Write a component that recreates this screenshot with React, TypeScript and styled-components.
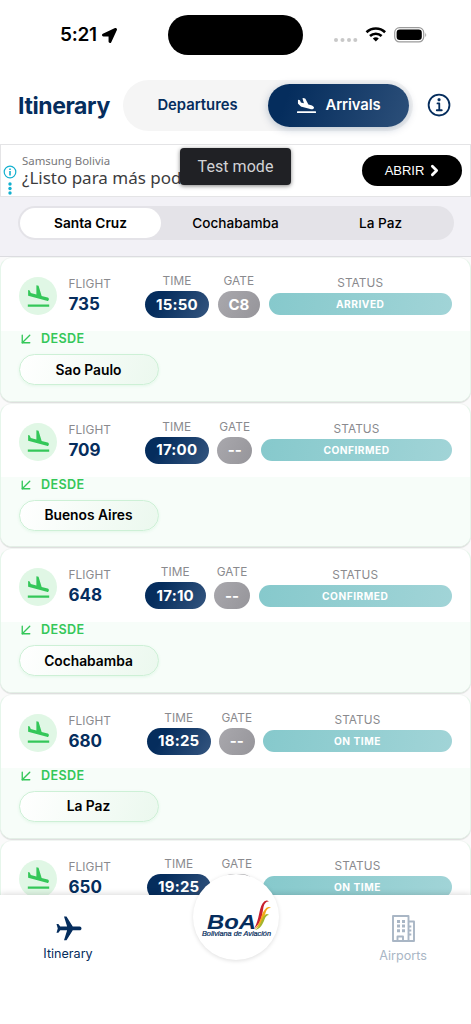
import React from "react";
import styled, { createGlobalStyle } from "styled-components";
import { MdFlight, MdFlightLand } from "react-icons/md";
import { FaPlaneArrival, FaLocationArrow } from "react-icons/fa";
import { IoInformationCircleOutline } from "react-icons/io5";
import { FiArrowDownLeft, FiChevronRight } from "react-icons/fi";

const NAVY = "#052d5d";
const GREEN = "#34c759";

const Global = createGlobalStyle`
  * { box-sizing: border-box; }
  body { margin: 0; background: #fff; font-family: Inter, "Liberation Sans", sans-serif; }
`;

const Screen = styled.div`
  position: relative;
  width: 471px;
  height: 1024px;
  overflow: hidden;
  display: flex;
  flex-direction: column;
  background: #fff;
`;

const Text = styled.span<{ $size: number; $weight?: number; $ls?: number; $color?: string; $lh?: number }>`
  display: block;
  white-space: nowrap;
  font-size: ${(p) => p.$size}px;
  font-weight: ${(p) => p.$weight ?? 400};
  letter-spacing: ${(p) => p.$ls ?? 0}px;
  color: ${(p) => p.$color ?? "#000"};
  line-height: ${(p) => p.$lh ?? 20}px;
`;

const StatusBar = styled.div`
  height: 70px;
  flex: none;
  display: flex;
  align-items: center;
  padding-left: 60px;
`;
const Clock = styled.div`
  width: 108px;
  display: flex;
  align-items: center;
  gap: 5px;
`;
const Island = styled.div`
  width: 135px;
  height: 40px;
  border-radius: 20px;
  background: #000;
`;
const Signals = styled.svg`
  margin-left: 30px;
`;

const Header = styled.header`
  height: 74px;
  flex: none;
  display: flex;
  align-items: center;
  padding: 0 15px 4px 18px;
`;
const Title = styled.h1`
  margin: 0;
  width: 105px;
  flex: none;
  padding-top: 1px;
  font-size: 23px;
  line-height: 28px;
  font-weight: 700;
  letter-spacing: -0.4px;
  color: ${NAVY};
`;
const Switcher = styled.div`
  width: 290px;
  flex: none;
  height: 51px;
  border-radius: 26px;
  background: #f5f5f5;
  display: flex;
  align-items: center;
  padding: 4px;
`;
const Mode = styled.div<{ $active?: boolean }>`
  width: 141px;
  height: 43px;
  border-radius: 22px;
  display: flex;
  align-items: center;
  justify-content: center;
  gap: 10px;
  color: #fff;
  flex: ${(p) => (p.$active ? "none" : 1)};
  ${(p) =>
    p.$active &&
    `background: linear-gradient(110deg, #052d5d 15%, #2c4f79); box-shadow: 0 2px 8px rgba(5,45,93,.25);`}
`;
const Info = styled.div`
  flex: none;
  margin-left: 12px;
  display: flex;
  color: ${NAVY};

  svg {
    stroke-width: 4;
  }
`;

const Ad = styled.div`
  height: 53px;
  flex: none;
  border: 1px solid #e4e4e6;
  background: #fff;
  display: flex;
  align-items: center;
  padding: 0 8px 0 2px;
`;
const AdChoices = styled.svg`
  width: 14px;
  height: 32px;
  margin: 20px 4px 0 0;
`;
const AdCopy = styled.div`
  flex: 1;
  padding-left: 1px;
  font-family: "Noto Sans", "Open Sans", sans-serif;
`;
const OpenButton = styled.div`
  width: 100px;
  height: 31px;
  border-radius: 16px;
  background: #000;
  color: #fff;
  display: flex;
  align-items: center;
  justify-content: center;
  gap: 2px;
  padding-left: 4px;
  font-family: "Liberation Sans", sans-serif;
`;
const Toast = styled.div`
  position: absolute;
  left: 180px;
  top: 148px;
  width: 111px;
  height: 37px;
  border-radius: 4px;
  background: #202125;
  box-shadow: 0 1px 4px rgba(0, 0, 0, 0.5);
  display: flex;
  align-items: center;
  justify-content: center;
  font-family: Roboto, sans-serif;
`;

const Cities = styled.div`
  height: 60px;
  flex: none;
  background: #f2f1f6;
  border-bottom: 1px solid #dcdce0;
  padding: 9px 17px 0 18px;
`;
const Segments = styled.div`
  height: 34px;
  border-radius: 17px;
  background: #e4e3e8;
  display: grid;
  grid-template-columns: 145px 145px 1fr;
  padding: 2px;
`;
const Segment = styled.div<{ $active?: boolean }>`
  width: 141px;
  height: 30px;
  border-radius: 15px;
  display: flex;
  align-items: center;
  justify-content: center;
  background: ${(p) => (p.$active ? "#fff" : "transparent")};
`;

const List = styled.main`
  height: 638px;
  flex: none;
  overflow: hidden;
  background: #fafafa;
`;
const Card = styled.article`
  margin-bottom: 1px;
  border: 1px solid #e6f6eb;
  border-top-color: #f1f5f2;
  border-bottom-color: #e3efe6;
  border-radius: 12px;
  background: #fff;
  box-shadow: 0 1px 1px rgba(0, 0, 0, 0.12);
  overflow: hidden;
`;
const Summary = styled.div`
  height: 73px;
  display: flex;
  padding-left: 18px;
`;
const Badge = styled.div`
  width: 38px;
  height: 38px;
  flex: none;
  margin-top: 19px;
  border-radius: 50%;
  background: #e0f7e5;
  color: ${GREEN};
  display: flex;
  align-items: center;
  justify-content: center;
`;
const FlightCol = styled.div<{ $w: number }>`
  width: ${(p) => p.$w}px;
  flex: none;
  padding: 18px 0 0 11.5px;
`;
const Col = styled.div<{ $w: number; $top: number }>`
  width: ${(p) => p.$w}px;
  flex: none;
  margin-right: 8.6px;
  padding-top: ${(p) => p.$top}px;
  display: flex;
  flex-direction: column;
  align-items: center;
  gap: 2px;
`;
const Pill = styled.div<{ $kind: "time" | "gate" | "status" }>`
  width: 100%;
  height: ${(p) => (p.$kind === "status" ? 22 : 27)}px;
  border-radius: 14px;
  display: flex;
  align-items: center;
  justify-content: center;
  background: ${(p) =>
    ({
      time: "linear-gradient(120deg, #052d5d 25%, #34557f)",
      gate: "linear-gradient(120deg, #a9a8ad, #96959a)",
      status: "linear-gradient(100deg, #86c9cc, #a1d4d7)",
    })[p.$kind]};
`;
const Origin = styled.div`
  height: 69.65px;
  background: #f7fdf9;
  padding: 0 18px;
`;
const From = styled.div`
  height: 16px;
  display: flex;
  align-items: center;
  gap: 6px;
  margin-left: -2px;
  color: ${GREEN};
`;
const Place = styled.div`
  width: 140px;
  height: 31px;
  margin-top: 7px;
  padding-right: 1px;
  border: 1px solid #cdf0d6;
  border-radius: 16px;
  background: linear-gradient(110deg, #fff, #ebf8ee);
  box-shadow: 0 1px 3px rgba(52, 199, 89, 0.1);
  display: flex;
  align-items: center;
  justify-content: center;
`;

const TabBar = styled.nav`
  position: relative;
  height: 129px;
  flex: none;
  background: #fff;
  box-shadow: 0 -1px 6px rgba(0, 0, 0, 0.15);
  display: flex;
  justify-content: space-between;
  padding: 18px 33px 0 33px;
`;
const Tab = styled.div<{ $gap: number }>`
  width: 70px;
  display: flex;
  flex-direction: column;
  align-items: center;
  gap: ${(p) => p.$gap}px;
  color: ${NAVY};
`;
const Plane = styled(MdFlight)`
  transform: rotate(90deg);
  margin: 1px 0 0 2px;
`;
const Logo = styled.div`
  position: absolute;
  left: 193px;
  top: -21px;
  width: 86px;
  height: 86px;
  border-radius: 50%;
  background: #fff;
  box-shadow: 0 1px 4px rgba(0, 0, 0, 0.13);
`;

type Flight = {
  no: string; time: string; gate: string; status: string; from?: string;
  lead: number; timeW: number; gateW: number; statusW: number;
};

const flights: Flight[] = [
  { no: "735", time: "15:50", gate: "C8", status: "ARRIVED", from: "Sao Paulo", lead: 88, timeW: 64, gateW: 42.5, statusW: 183 },
  { no: "709", time: "17:00", gate: "--", status: "CONFIRMED", from: "Buenos Aires", lead: 88, timeW: 63.5, gateW: 35.3, statusW: 191 },
  { no: "648", time: "17:10", gate: "--", status: "CONFIRMED", from: "Cochabamba", lead: 88, timeW: 60.5, gateW: 36, statusW: 193 },
  { no: "680", time: "18:25", gate: "--", status: "ON TIME", from: "La Paz", lead: 90, timeW: 63.5, gateW: 35.5, statusW: 188.5 },
  { no: "650", time: "19:25", gate: "--", status: "ON TIME", lead: 90, timeW: 63.5, gateW: 35.5, statusW: 188.5 },
];

const Label = ({ children }: { children: React.ReactNode }) => (
  <Text $size={11.8} $color="#8a8a8e" $lh={16} $ls={0.1}>{children}</Text>
);

const FlightCard = ({ f }: { f: Flight }) => (
  <Card>
    <Summary>
      <Badge><MdFlightLand size={27} /></Badge>
      <FlightCol $w={f.lead}>
        <Label>FLIGHT</Label>
        <Text $size={17} $weight={700} $color={NAVY} $lh={24}>{f.no}</Text>
      </FlightCol>
      <Col $w={f.timeW} $top={15}>
        <Label>TIME</Label>
        <Pill $kind="time"><Text $size={15} $weight={700} $color="#fff" $ls={0.2}>{f.time}</Text></Pill>
      </Col>
      <Col $w={f.gateW} $top={15}>
        <Label>GATE</Label>
        <Pill $kind="gate"><Text $size={15} $weight={700} $color="#fff">{f.gate}</Text></Pill>
      </Col>
      <Col $w={f.statusW} $top={17.3}>
        <Label>STATUS</Label>
        <Pill $kind="status"><Text $size={10.2} $weight={700} $color="#fff" $ls={0.5}>{f.status}</Text></Pill>
      </Col>
    </Summary>
    {f.from && (
      <Origin>
        <From>
          <FiArrowDownLeft size={18} strokeWidth={1.8} />
          <Text $size={12.6} $weight={600} $color={GREEN} $lh={16} $ls={0.35}>DESDE</Text>
        </From>
        <Place><Text $size={13.8} $weight={600}>{f.from}</Text></Place>
      </Origin>
    )}
  </Card>
);

const App = () => (
  <Screen>
    <Global />
    <StatusBar>
      <Clock>
        <Text $size={19} $weight={600} $ls={-0.3} $lh={24}>5:21</Text>
        <FaLocationArrow size={15} />
      </Clock>
      <Island />
      <Signals width="96" height="20" viewBox="0 0 96 20">
        <g fill="#c8c8c8">
          <circle cx="3" cy="15" r="2" /><circle cx="9.5" cy="15" r="2" /><circle cx="16" cy="15" r="2" /><circle cx="22.3" cy="15" r="2" />
        </g>
        <g fill="none" stroke="#000" strokeWidth="2.6">
          <path d="M33.5 7.2a13.5 13.5 0 0 1 18.6 0" />
          <path d="M37 11a8.5 8.5 0 0 1 11.6 0" />
        </g>
        <path d="M39.8 13.5a4.5 4.5 0 0 1 6 0L42.8 16.6z" />
        <rect x="61.7" y="2.7" width="29" height="14.2" rx="4.8" fill="none" stroke="#9b9b9b" strokeWidth="1.2" />
        <rect x="63.6" y="4.6" width="25.2" height="10.4" rx="3.2" />
        <path d="M92.3 7.6q1.8 2.2 0 4.6z" fill="#9b9b9b" />
      </Signals>
    </StatusBar>

    <Header>
      <Title>Itinerary</Title>
      <Switcher>
        <Mode><Text $size={14.8} $weight={600} $color={NAVY}>Departures</Text></Mode>
        <Mode $active>
          <FaPlaneArrival size={19} />
          <Text $size={14.8} $weight={600} $color="#fff" $ls={-0.1}>Arrivals</Text>
        </Mode>
      </Switcher>
      <Info><IoInformationCircleOutline size={29} /></Info>
    </Header>

    <Ad>
      <AdChoices viewBox="0 0 14 32">
        <circle cx="7" cy="7" r="5.8" fill="none" stroke="#12b0cf" strokeWidth="1.2" />
        <path d="M6.2 3.4h1.6v1.5H6.2zM6.2 6h1.6v4.6H6.2z" fill="#12b0cf" />
        <g fill="#12b0cf"><circle cx="7" cy="19" r="1.7" /><circle cx="7" cy="23.5" r="1.7" /><circle cx="7" cy="28" r="1.7" /></g>
      </AdChoices>
      <AdCopy>
        <Text $size={11.4} $color="#77777a" $lh={15}>Samsung Bolivia</Text>
        <Text $size={17} $color="#3c3c3e" $lh={20}>¿Listo para más pod</Text>
      </AdCopy>
      <OpenButton>
        <Text $size={13} $color="#fff">ABRIR</Text>
        <FiChevronRight size={17} strokeWidth={4} />
      </OpenButton>
    </Ad>

    <Cities>
      <Segments>
        <Segment $active><Text $size={13.7} $weight={600}>Santa Cruz</Text></Segment>
        <Segment><Text $size={13.6} $weight={500}>Cochabamba</Text></Segment>
        <Segment><Text $size={13.6} $weight={500}>La Paz</Text></Segment>
      </Segments>
    </Cities>

    <List>{flights.map((f) => <FlightCard key={f.no} f={f} />)}</List>

    <TabBar>
      <Tab $gap={0}>
        <Plane size={30} />
        <Text $size={12.6} $color={NAVY}>Itinerary</Text>
      </Tab>
      <Tab $gap={3}>
        <svg width="28" height="30" viewBox="0 0 28 30" fill="none" stroke="#a9b6c5" strokeWidth="1.9" strokeLinejoin="round">
          <path d="M4 3h15.500v25H4zM19.500 8.500H25V28h-5.500M8.500 28v-4.500h5.500V28" />
          <g fill="#a9b6c5" stroke="none">
            <path d="M8 7h3v3H8zM13 7h3v3h-3zM8 11.600h3v3H8zM13 11.600h3v3h-3zM8 16.200h3v3H8zM13 16.200h3v3h-3z" />
            <path d="M20 12.500h2.300v2H20zM20 16.500h2.300v2H20zM20 20.500h2.300v2H20z" />
          </g>
        </svg>
        <Text $size={12.6} $color="#a9b6c5">Airports</Text>
      </Tab>
      <Logo>
        <svg width="86" height="86" viewBox="0 0 86 86">
          <text x="14" y="54.500" fontFamily="Liberation Sans" fontStyle="italic" fontWeight="700" fontSize="19.500" fill={NAVY} textLength="49" lengthAdjust="spacingAndGlyphs">BoA</text>
          <text x="9" y="61.500" fontFamily="Liberation Sans" fontStyle="italic" fontWeight="400" fontSize="6.500" fill={NAVY} stroke={NAVY} strokeWidth="0.200" textLength="69" lengthAdjust="spacingAndGlyphs">Boliviana de Aviación</text>
          <path d="M61 55C67 44 65.500 36 69.500 29.500Q72.500 25 76 27.500Q72 27 70.500 33C69 41 69 48 61 55z" fill="#c8202f" />
          <path d="M61.500 55.500C68.500 48 67.500 41 71.500 36Q74.500 31.500 78 34Q74 33.500 72.500 39C70.500 46 68 52 61.500 55.500z" fill="#f4a81a" />
          <path d="M62 56C68.500 51 68 46 71 42Q73.500 38.500 76 41Q73 41 71.500 45.500C69.500 51 67 55 62 56z" fill="#a3b52c" />
        </svg>
      </Logo>
    </TabBar>
    <Toast><Text $size={16} $color="#d2d3d6" $ls={0.05}>Test mode</Text></Toast>
  </Screen>
);

export default App;
